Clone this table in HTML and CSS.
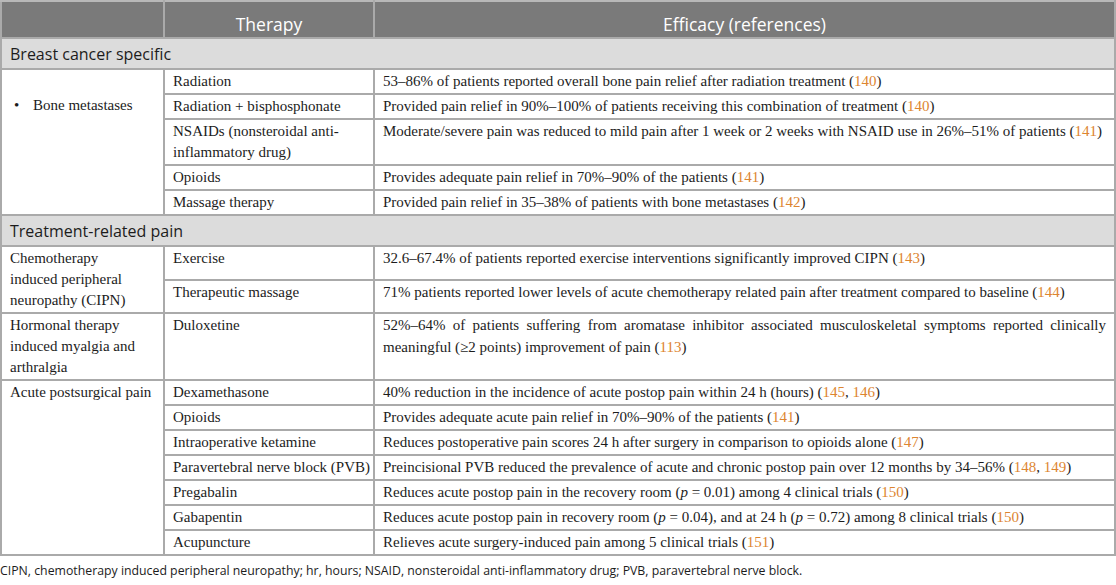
FILE: index.html
```html
<!DOCTYPE html>
<html lang="en">
<head>
<meta charset="utf-8">
<title>Pain management therapies</title>
<link rel="stylesheet" href="styles.css">
</head>
<body>
<table class="tbl">
  <colgroup>
    <col class="c1">
    <col class="c2">
    <col class="c3">
  </colgroup>
  <thead>
    <tr class="head">
      <th></th>
      <th>Therapy</th>
      <th>Efficacy (references)</th>
    </tr>
  </thead>
  <tbody>
    <tr class="section"><td colspan="3">Breast cancer specific</td></tr>
    <tr>
      <td rowspan="5" class="cond"><ul class="bul"><li>Bone metastases</li></ul></td>
      <td>Radiation</td>
      <td>53–86% of patients reported overall bone pain relief after radiation treatment (<a class="ref">140</a>)</td>
    </tr>
    <tr>
      <td>Radiation + bisphosphonate</td>
      <td>Provided pain relief in 90%–100% of patients receiving this combination of treatment (<a class="ref">140</a>)</td>
    </tr>
    <tr>
      <td>NSAIDs (nonsteroidal anti-inflammatory drug)</td>
      <td>Moderate/severe pain was reduced to mild pain after 1 week or 2 weeks with NSAID use in 26%–51% of patients (<a class="ref">141</a>)</td>
    </tr>
    <tr>
      <td>Opioids</td>
      <td>Provides adequate pain relief in 70%–90% of the patients (<a class="ref">141</a>)</td>
    </tr>
    <tr>
      <td>Massage therapy</td>
      <td>Provided pain relief in 35–38% of patients with bone metastases (<a class="ref">142</a>)</td>
    </tr>
    <tr class="section"><td colspan="3">Treatment-related pain</td></tr>
    <tr>
      <td rowspan="2" class="cond">Chemotherapy<br>induced peripheral neuropathy (CIPN)</td>
      <td>Exercise</td>
      <td>32.6–67.4% of patients reported exercise interventions significantly improved CIPN (<a class="ref">143</a>)</td>
    </tr>
    <tr>
      <td>Therapeutic massage</td>
      <td>71% patients reported lower levels of acute chemotherapy related pain after treatment compared to baseline (<a class="ref">144</a>)</td>
    </tr>
    <tr>
      <td class="cond">Hormonal therapy induced myalgia and arthralgia</td>
      <td>Duloxetine</td>
      <td class="just">52%–64% of patients suffering from aromatase inhibitor associated musculoskeletal symptoms reported clinically meaningful (≥2 points) improvement of pain (<a class="ref">113</a>)</td>
    </tr>
    <tr>
      <td rowspan="7" class="cond">Acute postsurgical pain</td>
      <td>Dexamethasone</td>
      <td>40% reduction in the incidence of acute postop pain within 24 h (hours) (<a class="ref">145</a>, <a class="ref">146</a>)</td>
    </tr>
    <tr>
      <td>Opioids</td>
      <td>Provides adequate acute pain relief in 70%–90% of the patients (<a class="ref">141</a>)</td>
    </tr>
    <tr>
      <td>Intraoperative ketamine</td>
      <td>Reduces postoperative pain scores 24 h after surgery in comparison to opioids alone (<a class="ref">147</a>)</td>
    </tr>
    <tr>
      <td class="nowrap">Paravertebral nerve block (PVB)</td>
      <td>Preincisional PVB reduced the prevalence of acute and chronic postop pain over 12 months by 34–56% (<a class="ref">148</a>, <a class="ref">149</a>)</td>
    </tr>
    <tr>
      <td>Pregabalin</td>
      <td>Reduces acute postop pain in the recovery room (<i>p</i> = 0.01) among 4 clinical trials (<a class="ref">150</a>)</td>
    </tr>
    <tr>
      <td>Gabapentin</td>
      <td>Reduces acute postop pain in recovery room (<i>p</i> = 0.04), and at 24 h (<i>p</i> = 0.72) among 8 clinical trials (<a class="ref">150</a>)</td>
    </tr>
    <tr>
      <td>Acupuncture</td>
      <td>Relieves acute surgery-induced pain among 5 clinical trials (<a class="ref">151</a>)</td>
    </tr>
  </tbody>
</table>
<p class="foot">CIPN, chemotherapy induced peripheral neuropathy; hr, hours; NSAID, nonsteroidal anti-inflammatory drug; PVB, paravertebral nerve block.</p>
</body>
</html>
```

FILE: styles.css
```css
html, body {
  margin: 0;
  padding: 0;
  background: #ffffff;
}
body {
  width: 1116px;
  color: #1c1c1c;
  font-family: "Liberation Serif", "Times New Roman", serif;
}
.tbl {
  width: 1116px;
  border-collapse: collapse;
  table-layout: fixed;
}
.c1 { width: 163px; }
.c2 { width: 210px; }
.tbl td, .tbl th {
  border: 2px solid #aaaaaa;
  font-size: 15px;
  line-height: 21px;
  padding: 1px 8px 1px 8px;
  vertical-align: top;
  text-align: left;
}
.head th {
  background: #7a7a7a;
  color: #ffffff;
  font-family: "Open Sans", "Noto Sans", sans-serif;
  font-weight: 400;
  font-size: 17.5px;
  text-align: center;
  vertical-align: bottom;
  height: 33px;
  padding: 0 8px 2px 8px;
  border-top-color: #b8b8b8;
}
.section td {
  background: #dcdcdc;
  font-family: "Open Sans", "Noto Sans", sans-serif;
  font-size: 16px;
  height: 26px;
  vertical-align: bottom;
  padding: 0 8px 3px 8px;
}
.bul {
  margin: 0;
  padding: 24px 0 0 4px;
  list-style: none;
}
.bul li::before {
  content: "•";
  display: inline-block;
  width: 19px;
}
.tbl td.just {
  text-align: justify;
  line-height: 21.5px;
}
.nowrap {
  white-space: nowrap;
}
.ref {
  color: #dd8530;
  text-decoration: none;
}
.foot {
  margin: 6px 0 0 0;
  font-family: "Open Sans", "Noto Sans", sans-serif;
  font-size: 12.3px;
  line-height: 18px;
  color: #1c1c1c;
}
```
